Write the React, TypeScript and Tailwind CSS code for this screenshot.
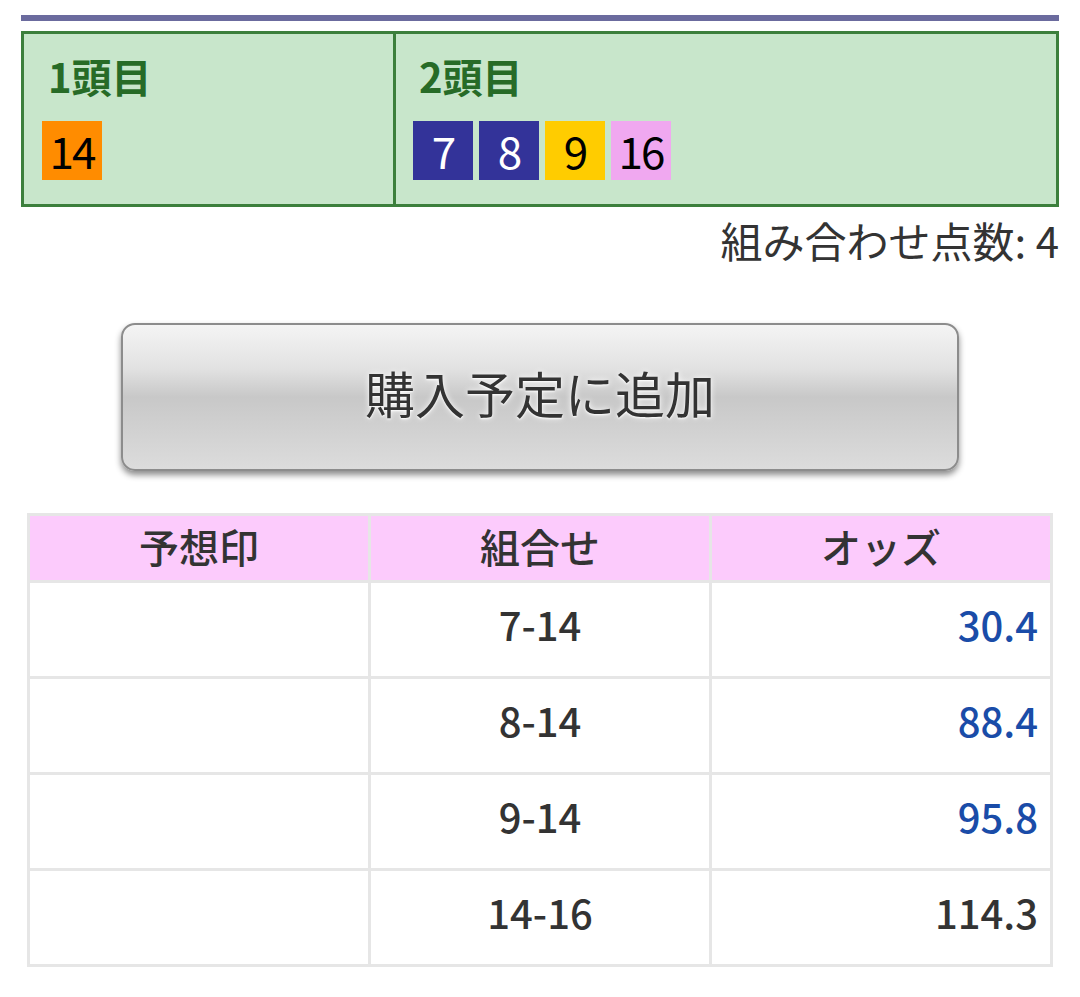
const font = { fontFamily: '"Noto Sans CJK JP", "Noto Sans", sans-serif' };

type Horse = { num: number; bg: string; fg: string };

const first: Horse[] = [{ num: 14, bg: "bg-[#ff8c00]", fg: "text-black" }];
const second: Horse[] = [
  { num: 7, bg: "bg-[#333399]", fg: "text-white" },
  { num: 8, bg: "bg-[#333399]", fg: "text-white" },
  { num: 9, bg: "bg-[#ffcc00]", fg: "text-black" },
  { num: 16, bg: "bg-[#f0a8f0]", fg: "text-black" },
];

const rows = [
  { combo: "7-14", odds: "30.4", hot: true },
  { combo: "8-14", odds: "88.4", hot: true },
  { combo: "9-14", odds: "95.8", hot: true },
  { combo: "14-16", odds: "114.3", hot: false },
];

function HorseBox({ h }: { h: Horse }) {
  return (
    <span
      className={`flex h-[59px] w-[60px] items-center justify-center pb-[2px] text-[44px] leading-none tracking-[-2px] ${h.bg} ${h.fg}`}
    >
      {h.num}
    </span>
  );
}

function Slot({ title, horses, className }: { title: string; horses: Horse[]; className: string }) {
  return (
    <div className={`flex flex-col pt-[17px] ${className}`}>
      <div className="pl-[6px] text-[40px] font-bold leading-[50px] text-[#276b27]">{title}</div>
      <div className="mt-[20px] flex gap-[6px]">
        {horses.map((h) => (
          <HorseBox key={h.num} h={h} />
        ))}
      </div>
    </div>
  );
}

export default function App() {
  return (
    <div className="min-h-[997px] bg-white px-[21px] pt-[15px] pb-[30px]" style={font}>
      <div className="h-[6px] bg-[#6b6b9e]" />

      <div className="mt-[10px] flex h-[176px] border-[3px] border-[#3c7f3c] bg-[#c8e6cb]">
        <Slot title="1頭目" horses={first} className="w-[372px] border-r-[3px] border-[#3c7f3c] pl-[18px]" />
        <Slot title="2頭目" horses={second} className="flex-1 pl-[17px]" />
      </div>

      <div className="mt-[7px] text-right text-[42px] leading-[52px] text-[#333]">組み合わせ点数: 4</div>

      <button
        className="mx-auto mt-[57px] flex h-[148px] w-[838px] items-center justify-center rounded-[14px] border-[2px] border-[#8c8c8c] bg-[linear-gradient(to_bottom,#f4f4f4_0%,#e2e2e2_30%,#c8c8c8_50%,#d2d2d2_75%,#dcdcdc_100%)] pb-[10px] text-[50px] text-[#333] shadow-[0_4px_6px_rgba(0,0,0,0.45)] [text-shadow:0_0_6px_#fff,0_1px_2px_#fff]"
      >
        購入予定に追加
      </button>

      <table className="mx-[6px] mt-[42px] w-[1026px] table-fixed border-collapse text-[#333]">
        <thead>
          <tr className="h-[67px] bg-[#fccbfc]">
            <th className="border-[3px] border-[#e6e6e6] pb-[4px] text-[40px] font-medium">予想印</th>
            <th className="border-[3px] border-[#e6e6e6] pb-[4px] text-[40px] font-medium">組合せ</th>
            <th className="border-[3px] border-[#e6e6e6] pb-[4px] text-[40px] font-medium">オッズ</th>
          </tr>
        </thead>
        <tbody>
          {rows.map((r) => (
            <tr key={r.combo} className="h-[96px]">
              <td className="border-[3px] border-[#e6e6e6]" />
              <td className="border-[3px] border-[#e6e6e6] pb-[12px] text-center text-[40px] font-medium">
                {r.combo}
              </td>
              <td
                className={`border-[3px] border-[#e6e6e6] pr-[12px] pb-[12px] text-right text-[40px] font-medium ${
                  r.hot ? "text-[#1a4ca8]" : "text-[#333]"
                }`}
              >
                {r.odds}
              </td>
            </tr>
          ))}
        </tbody>
      </table>
    </div>
  );
}
